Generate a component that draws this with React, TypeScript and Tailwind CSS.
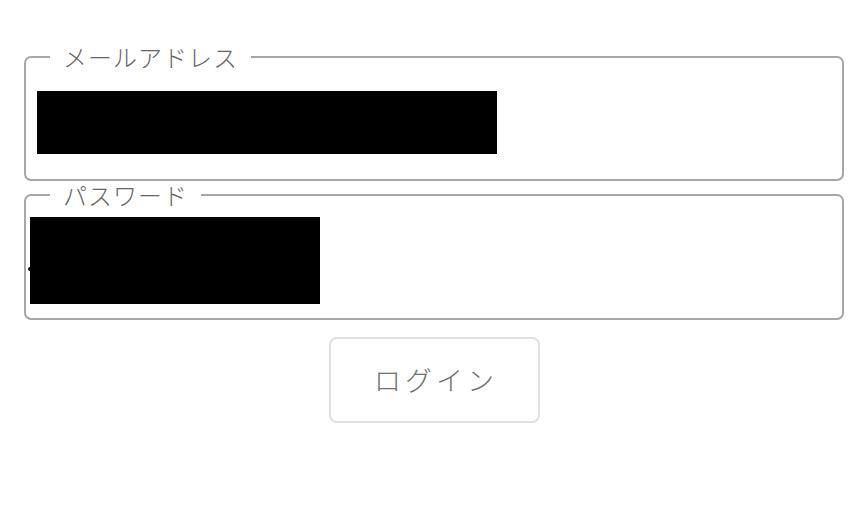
import React from "react";

export default function App() {
  const font = { fontFamily: '"Noto Sans CJK JP", "Noto Sans", sans-serif' };
  return (
    <div className="w-[868px] h-[530px] bg-white px-[24px] pt-[45px]" style={font}>
      <fieldset className="border-2 border-[#a6a6a6] rounded-[7px] pl-[11px] pb-[25px]">
        <legend className="ml-[13px] px-[13px] text-[24px] leading-[24px] tracking-[1px] font-light text-[#666666]">
          メールアドレス
        </legend>
        <div className="mt-[22px] w-[460px] h-[63px] bg-black" />
      </fieldset>
      <fieldset className="mt-[2px] border-2 border-[#a6a6a6] rounded-[7px] pl-[4px] pb-[14px]">
        <legend className="ml-[20px] px-[13px] text-[24px] leading-[24px] tracking-[1px] font-light text-[#666666]">
          パスワード
        </legend>
        <div className="relative mt-[10px] w-[290px] h-[87px]">
          <div className="absolute left-[-2px] top-[50px] w-[4px] h-[4px] rounded-full bg-black" />
          <div className="w-[290px] h-[87px] bg-black" />
        </div>
      </fieldset>
      <div className="flex justify-center mt-[17px]">
        <button className="w-[211px] h-[86px] border-2 border-[#e0e0e0] rounded-[8px] bg-white text-[27px] tracking-[4px] pl-[4px] font-light text-[#707070]">
          ログイン
        </button>
      </div>
    </div>
  );
}
